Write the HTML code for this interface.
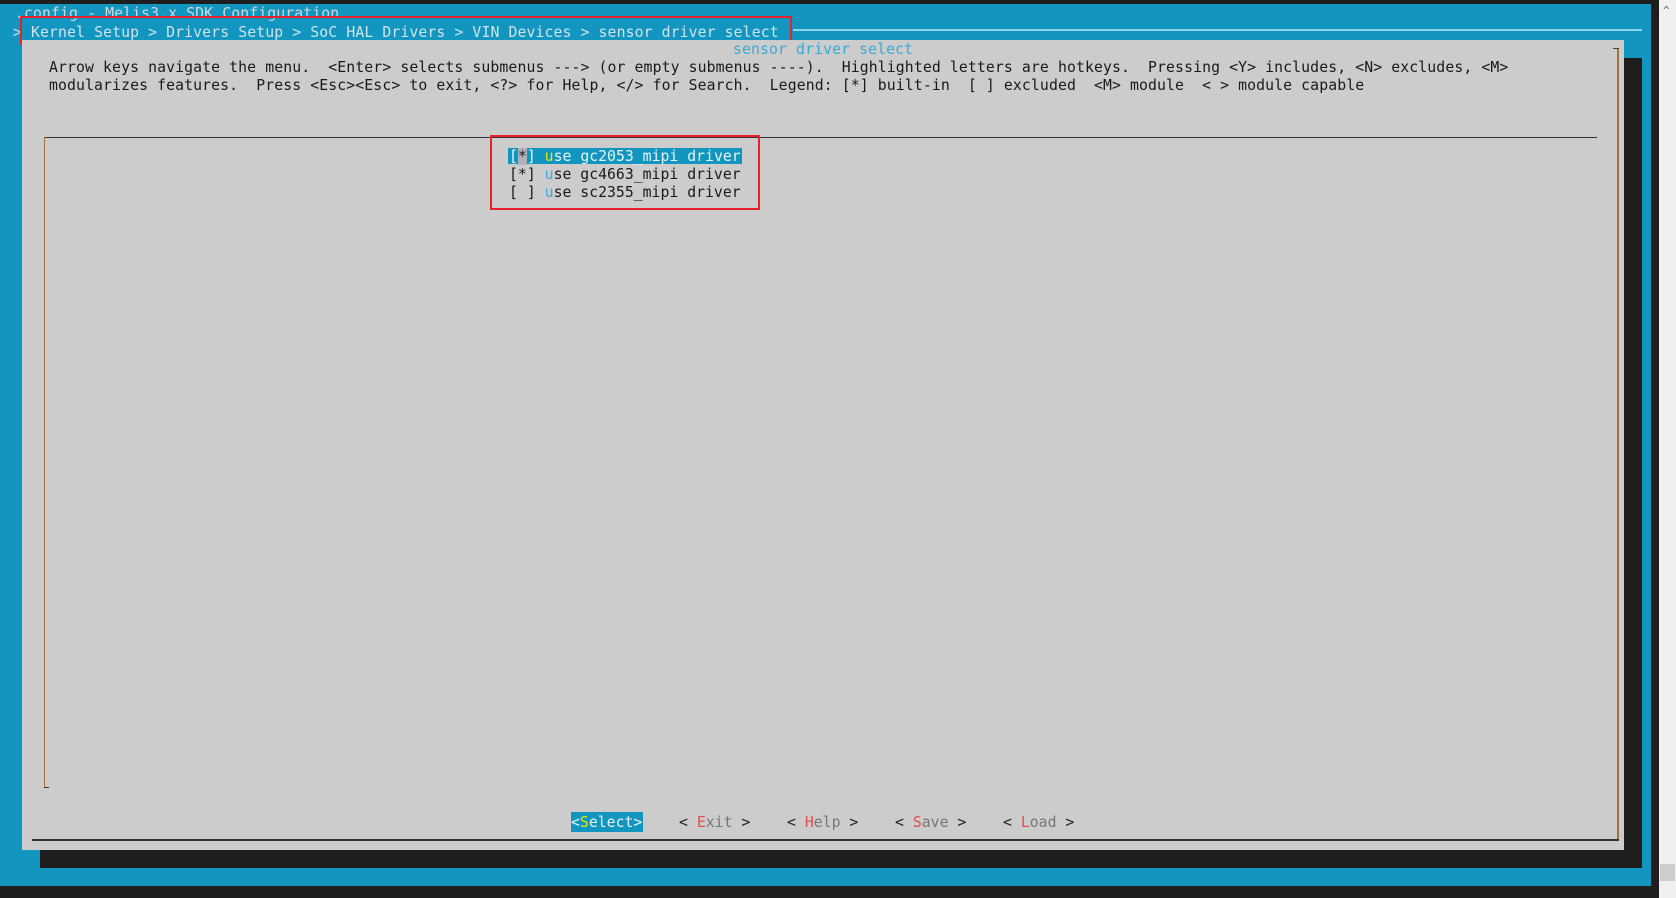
<!DOCTYPE html>
<html><head><style>
html,body{margin:0;padding:0;width:1676px;height:898px;overflow:hidden;background:#1e1e1e;}
*{box-sizing:border-box;}
.t{position:absolute;font-family:"DejaVu Sans Mono","Liberation Mono",monospace;font-size:14.8px;line-height:18px;white-space:pre;}
.abs{position:absolute;}
</style></head><body>
<div class="abs" style="left:0;top:4px;width:1651px;height:882px;background:#1296c0;"></div>
<div class="abs" style="left:1659px;top:0;width:17px;height:898px;background:#f0f0f0;"></div>
<div class="abs" style="left:1660px;top:864px;width:15px;height:17px;background:#cdcdcd;"></div>
<div class="t" style="left:1663px;top:2px;color:#606060;font-size:11px;">^</div>
<div class="t" style="left:15px;top:5px;color:#cfd8dc;letter-spacing:0.1px;">.config - Melis3.x SDK Configuration</div>
<div class="t" style="left:13px;top:24px;color:#cfe4ec;letter-spacing:0.1px;">&gt; Kernel Setup &gt; Drivers Setup &gt; SoC HAL Drivers &gt; VIN Devices &gt; sensor driver select</div>
<div class="abs" style="left:793px;top:29px;width:849px;height:2px;background:#8fd3ea;"></div>
<div class="abs" style="left:20px;top:16px;width:772px;height:29px;border:2px solid #e8202a;"></div>
<div class="abs" style="left:40px;top:58px;width:1602px;height:810px;background:#1e1e1e;"></div>
<div class="abs" style="left:22px;top:40px;width:1602px;height:810px;background:#cccccc;"></div>
<div class="t" style="left:733px;top:41px;color:#3aa9d4;letter-spacing:0.1px;">sensor driver select</div>
<div class="abs" style="left:1617px;top:48px;width:2px;height:792px;background:#a0703a;"></div>
<div class="abs" style="left:1613px;top:48px;width:6px;height:1px;background:#444;"></div>
<div class="abs" style="left:32px;top:839px;width:1587px;height:2px;background:#333;"></div>
<div class="t" style="left:49px;top:59px;color:#1a1a1a;letter-spacing:0.1px;">Arrow keys navigate the menu.  &lt;Enter&gt; selects submenus ---&gt; (or empty submenus ----).  Highlighted letters are hotkeys.  Pressing &lt;Y&gt; includes, &lt;N&gt; excludes, &lt;M&gt;
modularizes features.  Press &lt;Esc&gt;&lt;Esc&gt; to exit, &lt;?&gt; for Help, &lt;/&gt; for Search.  Legend: [*] built-in  [ ] excluded  &lt;M&gt; module  &lt; &gt; module capable</div>
<div class="abs" style="left:44px;top:137px;width:1553px;height:1px;background:#333;"></div>
<div class="abs" style="left:44px;top:137px;width:1px;height:651px;background:#a0703a;"></div>
<div class="abs" style="left:44px;top:787px;width:5px;height:1px;background:#333;"></div>
<div class="abs" style="left:508px;top:148px;width:234px;height:16px;background:#1296c0;"></div>
<div class="t" style="left:509px;top:148px;color:#e8f4f8;">[<span style="background:#b0b0b8;color:#222">*</span>] <span style="color:#e6e600">u</span>se gc2053_mipi driver</div>
<div class="t" style="left:509px;top:166px;color:#1a1a1a;">[*] <span style="color:#3ab0e0">u</span>se gc4663_mipi driver</div>
<div class="t" style="left:509px;top:184px;color:#1a1a1a;">[ ] <span style="color:#3ab0e0">u</span>se sc2355_mipi driver</div>
<div class="abs" style="left:490px;top:135px;width:270px;height:75px;border:2px solid #e8202a;"></div>
<div class="abs" style="left:571px;top:812px;width:72px;height:20px;background:#1296c0;"></div>
<div class="t" style="left:571px;top:814px;color:#e8f4f8;">&lt;<span style="color:#e6e600">S</span>elect&gt;</div>
<div class="t" style="left:679px;top:814px;color:#222;">&lt; <span style="color:#e05050">E</span><span style="color:#777">xit</span> &gt;</div>
<div class="t" style="left:787px;top:814px;color:#222;">&lt; <span style="color:#e05050">H</span><span style="color:#777">elp</span> &gt;</div>
<div class="t" style="left:895px;top:814px;color:#222;">&lt; <span style="color:#e05050">S</span><span style="color:#777">ave</span> &gt;</div>
<div class="t" style="left:1003px;top:814px;color:#222;">&lt; <span style="color:#e05050">L</span><span style="color:#777">oad</span> &gt;</div>
</body></html>
